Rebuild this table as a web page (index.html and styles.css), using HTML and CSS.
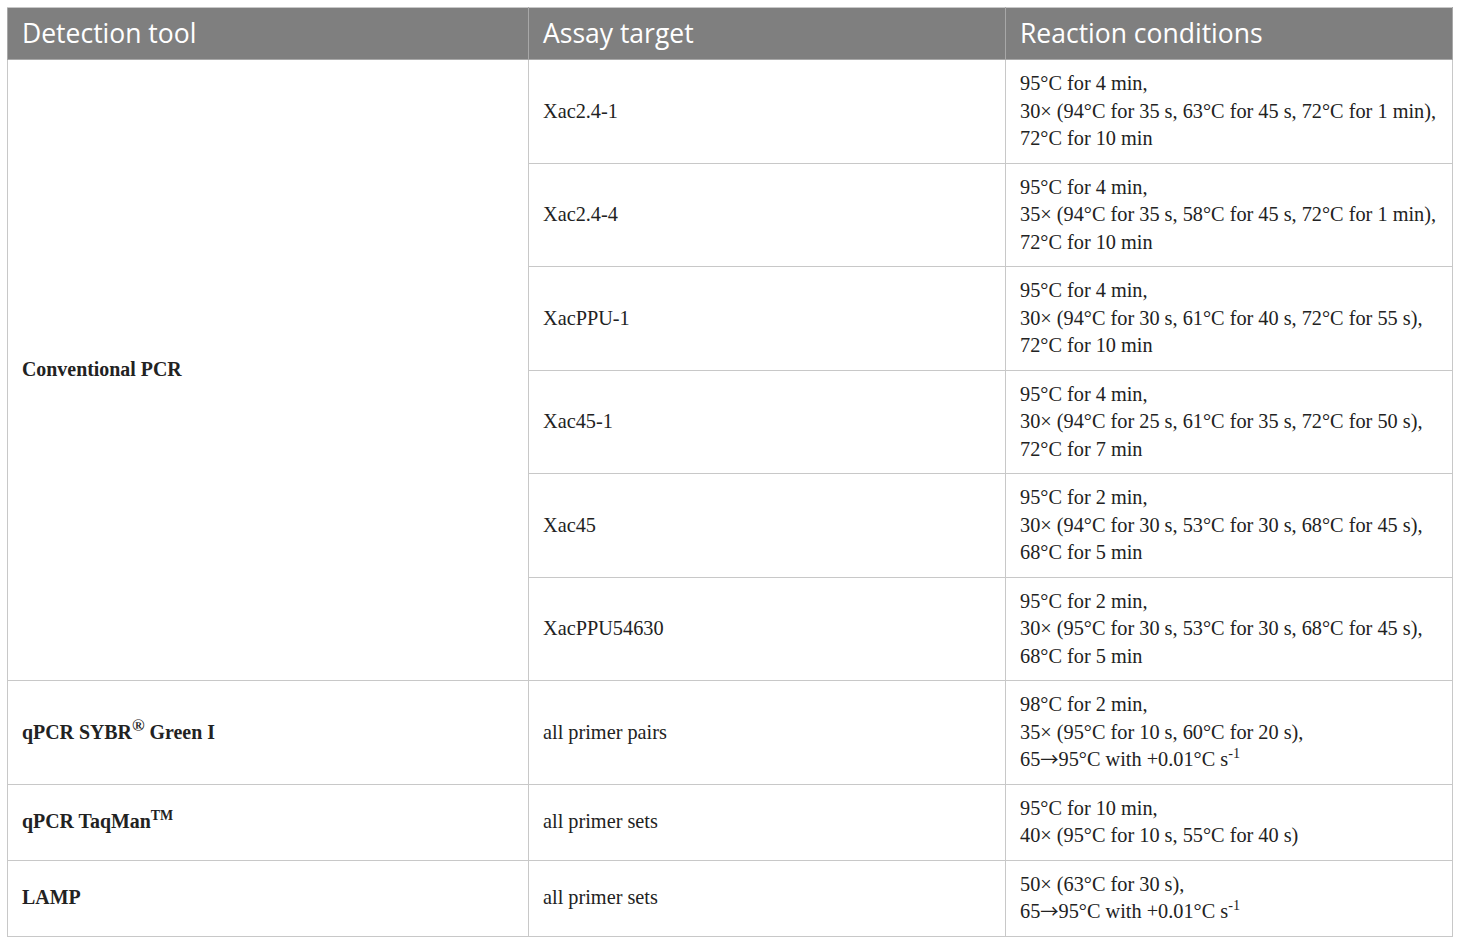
FILE: index.html
```html
<!DOCTYPE html>
<html>
<head>
<meta charset="utf-8">
<link rel="stylesheet" href="styles.css">
</head>
<body>
<table class="tbl">
  <colgroup>
    <col class="c1"><col class="c2"><col class="c3">
  </colgroup>
  <thead>
    <tr><th>Detection tool</th><th>Assay target</th><th>Reaction conditions</th></tr>
  </thead>
  <tbody>
    <tr>
      <td rowspan="6" class="tool">Conventional PCR</td>
      <td>Xac2.4-1</td>
      <td>95°C for 4 min,<br>30× (94°C for 35 s, 63°C for 45 s, 72°C for 1 min),<br>72°C for 10 min</td>
    </tr>
    <tr>
      <td>Xac2.4-4</td>
      <td>95°C for 4 min,<br>35× (94°C for 35 s, 58°C for 45 s, 72°C for 1 min),<br>72°C for 10 min</td>
    </tr>
    <tr>
      <td>XacPPU-1</td>
      <td>95°C for 4 min,<br>30× (94°C for 30 s, 61°C for 40 s, 72°C for 55 s),<br>72°C for 10 min</td>
    </tr>
    <tr>
      <td>Xac45-1</td>
      <td>95°C for 4 min,<br>30× (94°C for 25 s, 61°C for 35 s, 72°C for 50 s),<br>72°C for 7 min</td>
    </tr>
    <tr>
      <td>Xac45</td>
      <td>95°C for 2 min,<br>30× (94°C for 30 s, 53°C for 30 s, 68°C for 45 s),<br>68°C for 5 min</td>
    </tr>
    <tr>
      <td>XacPPU54630</td>
      <td>95°C for 2 min,<br>30× (95°C for 30 s, 53°C for 30 s, 68°C for 45 s),<br>68°C for 5 min</td>
    </tr>
    <tr>
      <td class="tool">qPCR SYBR<sup class="reg">®</sup> Green I</td>
      <td>all primer pairs</td>
      <td>98°C for 2 min,<br>35× (95°C for 10 s, 60°C for 20 s),<br>65<span class="arr">→</span>95°C with +0.01°C s<sup>-1</sup></td>
    </tr>
    <tr>
      <td class="tool">qPCR TaqMan<sup>TM</sup></td>
      <td>all primer sets</td>
      <td>95°C for 10 min,<br>40× (95°C for 10 s, 55°C for 40 s)</td>
    </tr>
    <tr>
      <td class="tool">LAMP</td>
      <td>all primer sets</td>
      <td>50× (63°C for 30 s),<br>65<span class="arr">→</span>95°C with +0.01°C s<sup>-1</sup></td>
    </tr>
  </tbody>
</table>
</body>
</html>
```
FILE: styles.css
```css
html, body {
  margin: 0;
  padding: 0;
  background: #ffffff;
}
body {
  padding: 7px 0 0 7px;
}
.tbl {
  border-collapse: collapse;
  width: 1445px;
  table-layout: fixed;
  font-family: "Liberation Serif", "Times New Roman", serif;
  font-size: 20.3px;
  color: #222;
}
.c1 { width: 521px; }
.c2 { width: 477px; }
.c3 { width: 447px; }
.tbl th {
  background: #7f7f7f;
  color: #ffffff;
  font-family: "Open Sans", "Noto Sans", sans-serif;
  font-weight: 400;
  font-size: 26.5px;
  text-align: left;
  height: 51px;
  padding: 0 14px;
  border: 1px solid #a8a8a8;
  border-top-color: #c8c8c8;
  vertical-align: middle;
  line-height: 1.2;
}
.tbl td {
  border: 1px solid #c8c8c8;
  padding: 10px 14px;
  line-height: 27.5px;
  vertical-align: middle;
}
.tool {
  font-weight: 700;
  font-size: 19.9px;
}
.arr {
  font-family: "Noto Sans CJK SC", sans-serif;
  font-size: 0.9em;
  line-height: 0;
}
sup {
  font-size: 0.7em;
  line-height: 0;
  vertical-align: 0.55em;
}
sup.reg {
  font-size: 0.85em;
  vertical-align: 0.45em;
}
```
